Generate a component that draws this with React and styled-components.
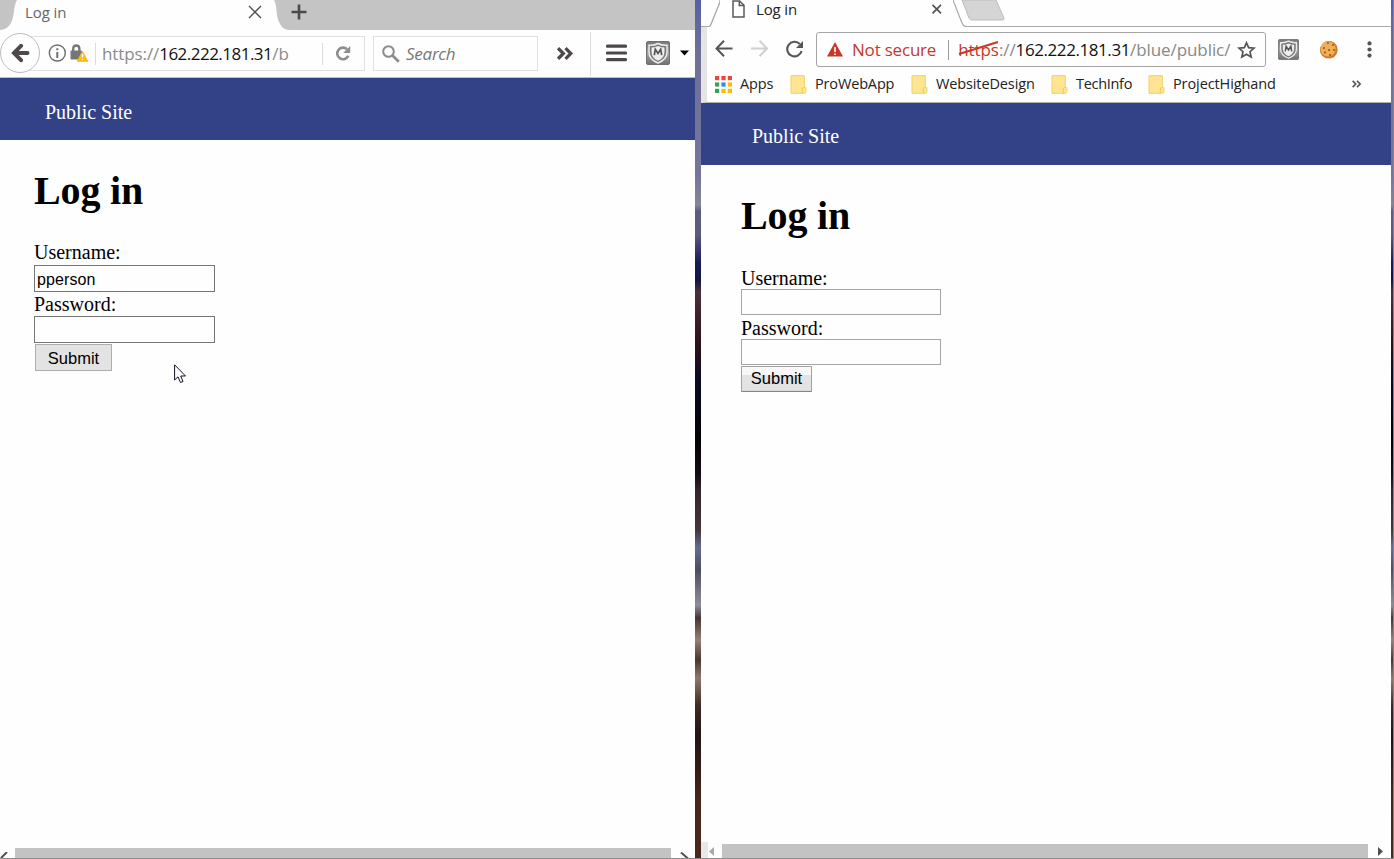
import React from 'react';
import styled, { createGlobalStyle } from 'styled-components';

const Global = createGlobalStyle`
  * { box-sizing: border-box; }
  html, body { margin: 0; overflow: hidden; background: #fefefe; }
  svg { display: block; flex: none; }
`;

const UI = "'Open Sans', 'Noto Sans', sans-serif";

const Desktop = styled.div`
  position: relative;
  width: 1394px;
  height: 859px;
  display: grid;
  grid-template-columns: 695px 6px 690px 3px;
  grid-template-rows: 858px 1px;
`;
const Wallpaper = styled.div`
  border-right: ${p => (p.$edge ? '1px solid #85838c' : 'none')};
  background: linear-gradient(#5361a6 0, #6e7096 50px, #74779b 180px, #858698 205px, #5d5b80 211px, #5c5a7c 235px,
    #191b59 262px, #111542 280px, #49303b 292px, #301319 340px, #070822 385px, #020204 440px, #160c14 475px,
    #34242c 490px, #44363b 530px, #656c91 548px, #4e4c60 570px, #8d8e99 605px, #453535 618px, #977f77 640px,
    #4a3530 660px, #8f776c 678px, #3f2b27 705px, #241416 735px, #341d18 770px, #48261a 800px, #4b281b 858px);
`;
const BottomEdge = styled.div`grid-column: 1 / -1; background: #8c8c8c;`;
const Window = styled.div`display: flex; flex-direction: column; background: #fefefe; overflow: hidden;`;

const Label = styled.span`
  display: block;
  font-family: ${UI};
  font-size: ${p => p.$size || 15}px;
  letter-spacing: ${p => p.$track || 0}px;
  font-style: ${p => (p.$italic ? 'italic' : 'normal')};
  color: ${p => p.$color || '#222'};
  line-height: ${p => p.$line || 22}px;
  white-space: pre;
  flex: none;
`;

const FoxTabs = styled.div`height: 30px; flex: none; display: flex; background: #c4c4c4;`;
const FoxTab = styled.div`
  width: 257px; height: 30px; background: #fefefe; display: flex; justify-content: space-between;
  padding: 2px 12px 0 8px;
`;
const Add = styled.div`padding: 4px 0 0 1px;`;
const FoxBar = styled.div`
  height: 48px; flex: none; display: flex; align-items: center;
  border-bottom: 1px solid #bcbcbc;
`;
const Back = styled.div`
  width: 40px; height: 40px; border-radius: 50%; border: 1px solid #bdbdbd; background: #fefefe; margin-top: -1px;
  display: flex; align-items: center; justify-content: center; flex: none; z-index: 1;
`;
const FoxUrl = styled.div`
  width: 345px; height: 35px; margin-left: -20px; border: 1px solid #e0e0e0;
  display: flex; align-items: center; padding-left: 27px; flex: none;
`;
const Rule = styled.i`
  width: 1px; height: ${p => p.$h}px; background: ${p => p.$c || '#dcdcdc'}; margin: 0 ${p => p.$r || 0}px 0 ${p => p.$l || 0}px; flex: none;
`;
const UrlText = styled.div`width: ${p => p.$w}px; display: flex; flex: none;`;
const FoxSearch = styled.div`
  width: 165px; height: 35px; margin-left: 8px; border: 1px solid #e0e0e0; display: flex; align-items: center;
  padding-left: 8px; gap: 6px; flex: none;
`;
const Slot = styled.div`margin-left: ${p => p.$l}px; margin-top: ${p => p.$t || 0}px; flex: none;`;

const SiteNav = styled.nav`
  height: 62px; flex: none; background: #334286; color: #fff; padding: ${p => p.$pad};
  font: 20px/22px 'Liberation Serif', serif;
`;
const Page = styled.main`
  flex: 1; padding: 0 0 0 ${p => p.$x}px; color: #000; font: 20px/22px 'Liberation Serif', serif;
`;
const Title = styled.h1`margin: 0; padding-top: 28px; height: 102px; font-size: 40px; line-height: 46px; letter-spacing: -0.15px;`;
const FieldLabel = styled.label`display: block; height: ${p => p.$h}px; line-height: ${p => p.$line || p.$h}px;`;
const Field = styled.input`
  display: block; width: ${p => p.$w}px; height: ${p => p.$h}px; padding: 2px 2px 0; margin: 0;
  border: 1px solid ${p => p.$c}; background: #fefefe; outline: none; color: #000;
  font: 16px 'Liberation Sans', sans-serif; letter-spacing: 0.1px;
`;
const Submit = styled.button`
  display: block; width: ${p => (p.$raised ? 71 : 77)}px; height: ${p => (p.$raised ? 26 : 27)}px;
  padding: ${p => (p.$raised ? '0 0 2px' : 0)};
  margin: ${p => (p.$raised ? '1px 0 0' : '1px 0 0 1px')};
  border: 1px solid ${p => (p.$raised ? '#a2a2a2' : '#adadad')};
  border-bottom-color: ${p => (p.$raised ? '#858585' : '#adadad')};
  border-radius: ${p => (p.$raised ? 1 : 0)}px; color: #000;
  background: ${p => (p.$raised ? 'linear-gradient(#f8f8f8 0 8px, #e3e3e3 8px 23px, #cfcfcf 24px)' : '#e3e3e3')};
  font: 16.5px/22px 'Liberation Sans', sans-serif;
`;

const Scroll = styled.div`height: ${p => p.$h}px; flex: none; display: flex; align-items: flex-end;`;
const Thumb = styled.div`width: ${p => p.$w}px; height: ${p => p.$h}px; background: #c3c3c3; flex: none;`;
const ScrollCorner = styled.div`width: 7px; height: 16px; background: #e8e8e8;`;

const ChromeTabs = styled.div`height: 27px; flex: none; display: flex;`;
const TabLine = styled.div`height: 27px; border-bottom: 1px solid #a9a9a9; width: ${p => p.$w}px; flex: none;`;
const ChromeTab = styled.div`width: 233px; display: flex; padding-left: 11px; flex: none;`;
const ChromeHead = styled.div`height: 76px; flex: none; border-left: 6px solid #e5e5e5; border-bottom: 1px solid #b0b0b0;`;
const ChromeBar = styled.div`height: 45px; display: flex; align-items: center;`;
const Omnibox = styled.div`
  width: 450px; height: 35px; margin-left: 12px; border: 1px solid #a5a5a5; border-radius: 3px; display: flex;
  align-items: center; padding-left: 10px; flex: none;
`;
const Struck = styled.span`
  position: relative; color: #c53929;
  svg { position: absolute; left: 0; top: 1px; }
`;
const Bookmarks = styled.div`height: 24px; display: flex; align-items: center; padding-left: 8px;`;
const Bookmark = styled.div`width: ${p => p.$w}px; display: flex; align-items: center; gap: ${p => p.$gap || 7}px; flex: none;`;
const Pointer = styled.svg`position: absolute; left: 174px; top: 364px;`;

const Shield = ({ size }) => (
  <svg width={size} height={size} viewBox="0 0 24 24">
    <defs><linearGradient id="steel" x2="0" y2="1"><stop stopColor="#777" /><stop offset=".5" stopColor="#a3a3a3" /><stop offset="1" stopColor="#707070" /></linearGradient></defs>
    <rect x=".5" y=".5" width="23" height="23" rx="1.5" fill="url(#steel)" stroke="#707070" />
    <path d="M3 4.2Q8 4.6 12 2.5Q16 4.6 21 4.2V11Q21 18.5 12 22Q3 18.5 3 11Z" fill="#777" stroke="#ececec" strokeWidth="1.5" />
    <path d="M5.5 6.5Q9 6.4 12 5Q15 6.4 18.5 6.5V11Q18.5 17 12 19.7Q5.5 17 5.5 11Z" fill="#ededed" />
    <path d="M8.3 14.2L9.3 8.3L12 12.5L14.7 8.3L15.7 14.2" fill="none" stroke="#555" strokeWidth="1.7" />
  </svg>
);
const Chevrons = ({ w, h, sw, color }) => (
  <svg width={w} height={h} viewBox="0 0 16 12"><path d="M1 1L6 6L1 11M8 1L13 6L8 11" fill="none" stroke={color} strokeWidth={sw} /></svg>
);
const Note = () => (
  <svg width="17" height="19" viewBox="0 0 17 19">
    <path d="M1 .7H14.3V12.3H15.2Q16 12.3 16 13.5V16.5Q16 18.3 14 18.3H1Z" fill="#fde591" stroke="#f4d160" />
    <path d="M12.3 18V14Q12.3 12.5 14 12.5" fill="none" stroke="#f2ca50" />
  </svg>
);
const AppsGrid = () => (
  <svg width="17" height="17" viewBox="0 0 17 17">
    {['#f4433a', '#f4433a', '#f4433a', '#34a45c', '#2f8cf0', '#fbbc05', '#34a45c', '#fbbc05', '#fbbc05'].map((c, i) => (
      <rect key={i} x={(i % 3) * 6.4} y={Math.floor(i / 3) * 6.4} width="4.2" height="4.2" fill={c} />
    ))}
  </svg>
);
const Cookie = () => (
  <svg width="20" height="20" viewBox="0 0 20 20">
    <path d="M5 2.2L8 .9L12 1L15.5 2.8L18 6L18.7 10L17.7 14L15 17.2L11 18.6L7 18.2L3.2 16L1 12L1 7.5L3 5Z" fill="#cf7a2a" />
    <circle cx="9" cy="8.8" r="7.6" fill="#f0ae55" />
    {[[9, 3], [14, 5], [5, 8], [10, 10], [6, 12.5], [15, 10], [11, 15]].map(([x, y]) => (
      <circle key={x + '-' + y} cx={x} cy={y} r=".95" fill="#8a4a1c" />
    ))}
  </svg>
);

function LoginForm({ inputWidth, inputHeight, firstLine, secondLine, labelHeights, border, value, raised }) {
  return (
    <>
      <FieldLabel $h={labelHeights[0]} $line={firstLine}>Username:</FieldLabel>
      <Field $w={inputWidth} $h={inputHeight} $c={border} defaultValue={value} />
      <FieldLabel $h={labelHeights[1]} $line={secondLine}>Password:</FieldLabel>
      <Field $w={inputWidth} $h={inputHeight} $c={border} type="password" />
      <Submit $raised={raised}>Submit</Submit>
    </>
  );
}

function FirefoxWindow() {
  return (
    <Window>
      <FoxTabs>
        <svg width="17" height="30"><path d="M17 0H17C13 7 15 15 11 23Q7 30 0 30H17Z" fill="#fefefe" /></svg>
        <FoxTab>
          <Label $size={15} $line={21} $color="#666" $track={-0.1}>Log in</Label>
          <svg width="14" height="20" viewBox="0 0 14 20"><path d="M1 4L13 16M13 4L1 16" stroke="#505050" strokeWidth="1.4" /></svg>
        </FoxTab>
        <svg width="16" height="30"><path d="M0 0C4 7 1 15 6 24Q9 30 16 30H0Z" fill="#fefefe" /></svg>
        <Add><svg width="16" height="16"><path d="M8 .5V15.5M.5 8H15.5" stroke="#4d4849" strokeWidth="2.6" /></svg></Add>
      </FoxTabs>
      <FoxBar>
        <Back><svg width="20" height="20" viewBox="0 0 20 20"><path d="M11 2.8L4 10L11 17.2M4.5 10H17.5" fill="none" stroke="#4d4849" strokeWidth="4" strokeLinecap="round" /></svg></Back>
        <FoxUrl>
          <svg width="19" height="19"><circle cx="9.3" cy="9" r="8" fill="none" stroke="#707070" strokeWidth="1.4" /><path d="M9.3 4.2V6.2M9.3 8V14" stroke="#707070" strokeWidth="2" /></svg>
          <Slot $l={2}>
            <svg width="20" height="19" viewBox="0 0 20 19">
              <path d="M4.2 8V5Q4.2 1.5 7.3 1.5Q10.4 1.5 10.4 5V8" fill="none" stroke="#767676" strokeWidth="2.3" />
              <rect x="1.5" y="6.5" width="11.5" height="9" rx="1" fill="#767676" />
              <path d="M13.5 7.3L18.7 17.3H8.3Z" fill="#fdb913" stroke="#fdb913" strokeWidth="1" strokeLinejoin="round" /><path d="M13.5 9.8V13.6M13.5 14.8V16.2" stroke="#fff" strokeWidth="1.4" />
            </svg>
          </Slot>
          <Rule $h={22} $l={6} $r={6} />
          <UrlText $w={220}><Label $size={17} $color="#8b8b8b" $track={-0.1}>https://</Label><Label $size={17} $color="#111" $track={-0.52}>162.222.181.31</Label><Label $size={17} $color="#8b8b8b">/b</Label></UrlText>
          <Rule $h={22} $r={12} />
          <svg width="17" height="17" viewBox="0 0 17 17"><path d="M13.3 10.8A5.8 5.8 0 1 1 12 4.2" fill="none" stroke="#8d8d8d" strokeWidth="2.6" /><path d="M15.2 1V8H8.2Z" fill="#8d8d8d" /></svg>
        </FoxUrl>
        <FoxSearch>
          <svg width="18" height="18" viewBox="0 0 18 18"><circle cx="6.5" cy="6.5" r="5.3" fill="none" stroke="#8b8b8b" strokeWidth="2" /><path d="M10.5 10.5L16.8 16.8" stroke="#8b8b8b" strokeWidth="2.8" /></svg>
          <Label $size={17} $italic $color="#777" $track={-0.25}>Search</Label>
        </FoxSearch>
        <Slot $l={19} $t={-1}><Chevrons w={17} h={13} sw={3} color="#4d4849" /></Slot>
        <Rule $h={44} $l={16} $r={15} />
        <Slot $l={0} $t={-2}><svg width="21" height="18"><path d="M1.5 2.2H19.5M1.5 9H19.5M1.5 15.6H19.5" stroke="#4d4849" strokeWidth="3.2" strokeLinecap="round" /></svg></Slot>
        <Slot $l={19} $t={-2}><Shield size={24} /></Slot>
        <Slot $l={10} $t={-2}><svg width="9" height="6"><path d="M0 .5H9L4.5 5.5Z" fill="#000" /></svg></Slot>
      </FoxBar>
      <SiteNav $pad="23px 0 0 45px">Public Site</SiteNav>
      <Page $x={34}>
        <Title>Log in</Title>
        <LoginForm inputWidth={181} inputHeight={27} labelHeights={[23, 24]} firstLine={21} border="#767676" value="pperson" />
      </Page>
      <Scroll $h={10}>
        <svg width="15" height="6"><path d="M7 0L1 6" stroke="#505050" strokeWidth="2" /></svg>
        <Thumb $w={656} $h={10} />
        <Slot $l={9}><svg width="10" height="6"><path d="M1 .5L8 6.5" stroke="#505050" strokeWidth="2" /></svg></Slot>
      </Scroll>
    </Window>
  );
}

function ChromeWindow() {
  return (
    <Window>
      <ChromeTabs>
        <TabLine $w={8} />
        <svg width="11" height="27"><path d="M0 26.5Q1.5 26 2.5 23L11 2V0" fill="none" stroke="#a9a9a9" strokeWidth="1.3" /></svg>
        <ChromeTab>
          <svg width="14" height="18"><path d="M2 1H8.5L13 5.3V17H2ZM8.3 1V5.5H13" fill="none" stroke="#595959" strokeWidth="1.5" /></svg>
          <Slot $l={11}><Label $size={15} $line={18} $track={-0.15}>Log in</Label></Slot>
          <Slot $l={134}><svg width="11" height="18"><path d="M1.5 4.8L10 13.3M10 4.8L1.5 13.3" stroke="#555" strokeWidth="1.7" /></svg></Slot>
        </ChromeTab>
        <svg width="53" height="27"><path d="M0 0L9 23Q10.5 26.5 13 26.5H53" fill="none" stroke="#a9a9a9" strokeWidth="1.2" /><path d="M9 0H43L51 18Q51.5 20 49 20H19Q17 20 16 18Z" fill="#d5d5d5" stroke="#bdbdbd" /></svg>
        <TabLine $w={385} />
      </ChromeTabs>
      <ChromeHead>
        <ChromeBar>
          <Slot $l={8} $t={-2}><svg width="18" height="17"><path d="M9 .8L1.5 8.5L9 16.2M1.5 8.5H17.5" fill="none" stroke="#555" strokeWidth="2" /></svg></Slot>
          <Slot $l={18} $t={-2}><svg width="17" height="17"><path d="M8.5 .8L16 8.5L8.5 16.2M16 8.5H0" fill="none" stroke="#d0d0d0" strokeWidth="2" /></svg></Slot>
          <Slot $l={17} $t={-1}><svg width="19" height="18"><path d="M16.6 11A7.3 7.3 0 1 1 14.8 4" fill="none" stroke="#555" strokeWidth="2.1" /><path d="M18 1V8H11Z" fill="#555" /></svg></Slot>
          <Omnibox>
            <svg width="16" height="15"><path d="M8 0L16 14.5H0Z" fill="#c53929" /><path d="M8 5V10M8 11.5V13" stroke="#fff" strokeWidth="1.6" /></svg>
            <Slot $l={9}><Label $size={17} $color="#c53929" $track={-0.2}>Not secure</Label></Slot>
            <Rule $h={20} $l={12} $r={9} $c="#9a9a9a" />
            <UrlText $w={274}>
              <Label $size={17} $color="#888" $track={-0.08}><Struck>https<svg width="42" height="18"><path d="M1 15L40 3" stroke="#c53929" strokeWidth="2.2" /></svg></Struck>://</Label>
              <Label $size={17} $color="#111" $track={-0.42}>162.222.181.31</Label>
              <Label $size={17} $color="#888" $track={-0.08}>/blue/public/</Label>
            </UrlText>
            <Slot $l={5}><svg width="19" height="18" viewBox="0 0 19 18"><path d="M9.5 1.8L11.7 6.6L17 7.1L13 10.7L14.2 16L9.5 13.2L4.8 16L6 10.7L2 7.1L7.3 6.6Z" fill="none" stroke="#555" strokeWidth="1.7" /></svg></Slot>
          </Omnibox>
          <Slot $l={12}><Shield size={21} /></Slot>
          <Slot $l={20}><Cookie /></Slot>
          <Slot $l={28}><svg width="5" height="17"><circle cx="2.5" cy="2.4" r="2.1" fill="#555" /><circle cx="2.5" cy="8.5" r="2.1" fill="#555" /><circle cx="2.5" cy="14.6" r="2.1" fill="#555" /></svg></Slot>
        </ChromeBar>
        <Bookmarks>
          <Bookmark $w={75} $gap={8}><AppsGrid /><Label $size={14.5} $track={-0.15}>Apps</Label></Bookmark>
          <Bookmark $w={121} $gap={8}><Note /><Label $size={14.5} $track={-0.15}>ProWebApp</Label></Bookmark>
          <Bookmark $w={140} $gap={8}><Note /><Label $size={14.5} $track={-0.12}>WebsiteDesign</Label></Bookmark>
          <Bookmark $w={97} $gap={8}><Note /><Label $size={14.5} $track={-0.3}>TechInfo</Label></Bookmark>
          <Bookmark $w={204} $gap={8}><Note /><Label $size={14.5} $track={-0.1}>ProjectHighand</Label></Bookmark>
          <Chevrons w={10} h={8} sw={2.6} color="#555" />
        </Bookmarks>
      </ChromeHead>
      <SiteNav $pad="22px 0 0 51px">Public Site</SiteNav>
      <Page $x={40}>
        <Title>Log in</Title>
        <LoginForm inputWidth={200} inputHeight={26} labelHeights={[22, 24]} secondLine={26} border="#a6a6a6" raised />
      </Page>
      <Scroll $h={16}>
        <ScrollCorner />
        <svg width="14" height="12"><path d="M6 1V10L1 5.5Z" fill="#a9a9a9" /></svg>
        <Thumb $w={646} $h={14} />
        <Slot $l={10}><svg width="6" height="12"><path d="M0 1V10L5 5.5Z" fill="#505050" /></svg></Slot>
      </Scroll>
    </Window>
  );
}

export default function App() {
  return (
    <>
      <Global />
      <Desktop>
        <FirefoxWindow />
        <Wallpaper />
        <ChromeWindow />
        <Wallpaper $edge />
        <BottomEdge />
        <Pointer width="13" height="20" viewBox="0 0 13 20">
          <path d="M.6 .8V16L4 12.8L6.5 18.5L9 17.5L6.7 12H11.5Z" fill="#fff" stroke="#101020" strokeWidth="1" />
        </Pointer>
      </Desktop>
    </>
  );
}
